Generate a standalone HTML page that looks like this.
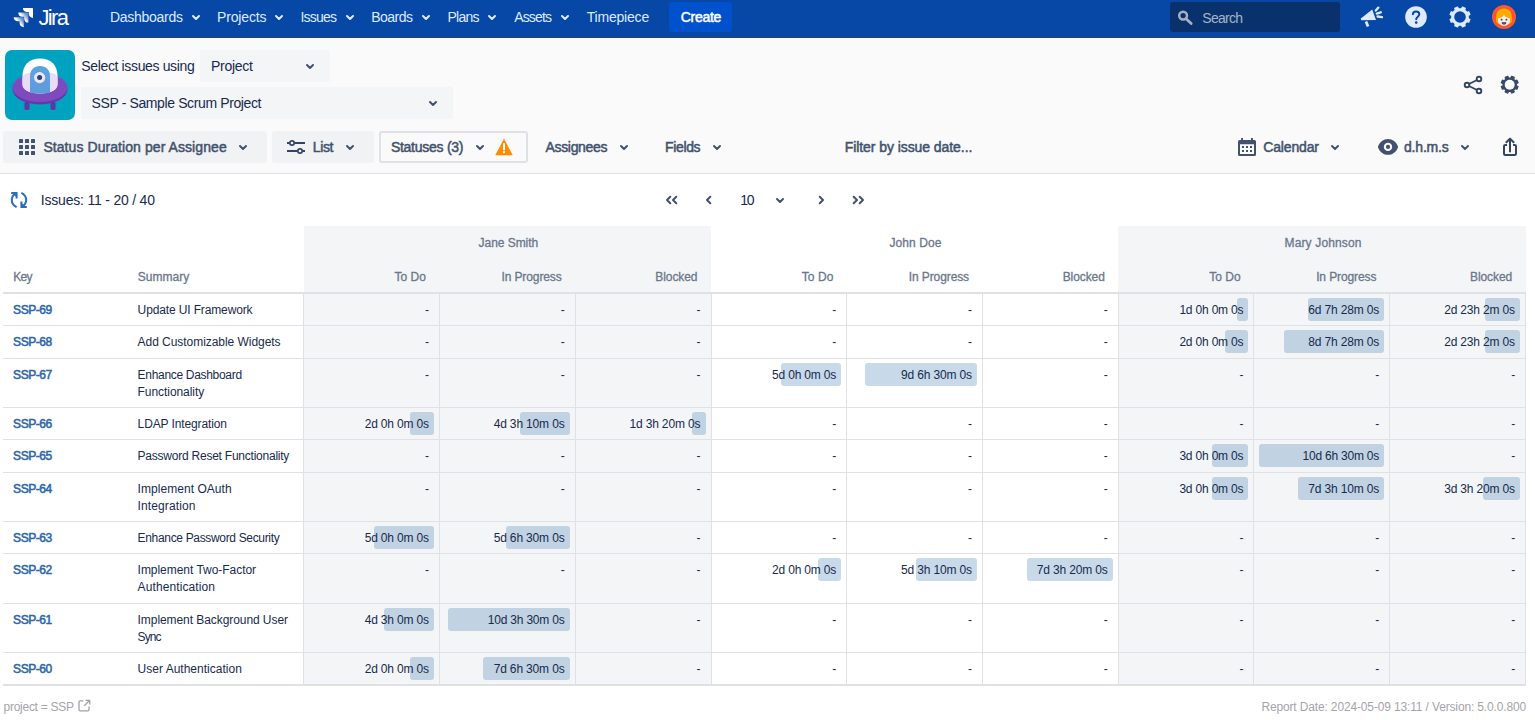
<!DOCTYPE html>
<html lang="en"><head><meta charset="utf-8"><title>Timepiece - Status Duration per Assignee</title>
<style>
html,body{margin:0;padding:0;}
body{width:1535px;height:720px;overflow:hidden;background:#fff;position:relative;font-family:"Liberation Sans", sans-serif;}
#root div,#root svg,#root span.t{position:absolute;}
#root span.t{white-space:nowrap;display:block;}
</style></head><body><div id="root">
<div style="left:0px;top:0px;width:1535px;height:37px;background:#0747A6;border-radius:0px;"></div>
<div style="left:0px;top:37px;width:1535px;height:1px;background:#2F3F5F;border-radius:0px;"></div>
<div style="left:0px;top:38px;width:1535px;height:135px;background:#FAFAFA;border-radius:0px;"></div>
<div style="left:0px;top:173px;width:1535px;height:1px;background:#DFE1E6;border-radius:0px;"></div>
<svg style="left:12px;top:6px;" width="24" height="24" viewBox="0 0 24 24"><defs><linearGradient id="jg1" x1="0.95" y1="0.25" x2="0.5" y2="0.62"><stop offset="0.15" stop-color="#fff" stop-opacity="0.4"/><stop offset="0.9" stop-color="#fff"/></linearGradient></defs>
<g transform="translate(-0.23,-0.03) scale(0.965)">
<path d="M11.53 2c0 2.400 1.970 4.350 4.350 4.350h1.780v1.700c0 2.400 1.940 4.340 4.340 4.350V2.840a.84.84 0 0 0-.84-.84h-9.630z" fill="#fff"/>
<path d="M6.770 6.800a4.362 4.362 0 0 0 4.340 4.340h1.800v1.720a4.362 4.362 0 0 0 4.340 4.340V7.630a.841.841 0 0 0-.83-.83H6.770z" fill="url(#jg1)"/>
<path d="M2 11.600c0 2.400 1.950 4.340 4.350 4.340h1.780v1.720c.01 2.390 1.950 4.340 4.340 4.340v-9.570a.84.84 0 0 0-.84-.84H2v.01z" fill="url(#jg1)"/>
</g></svg>
<svg style="left:191.0px;top:13.8px;" width="10" height="7" viewBox="0 0 10 7"><path d="M2 2 L5.0 5 L8 2" fill="none" stroke="#DEEBFF" stroke-width="2" stroke-linecap="round" stroke-linejoin="round"/></svg>
<svg style="left:274.0px;top:13.8px;" width="10" height="7" viewBox="0 0 10 7"><path d="M2 2 L5.0 5 L8 2" fill="none" stroke="#DEEBFF" stroke-width="2" stroke-linecap="round" stroke-linejoin="round"/></svg>
<svg style="left:344.5px;top:13.8px;" width="10" height="7" viewBox="0 0 10 7"><path d="M2 2 L5.0 5 L8 2" fill="none" stroke="#DEEBFF" stroke-width="2" stroke-linecap="round" stroke-linejoin="round"/></svg>
<svg style="left:421.0px;top:13.8px;" width="10" height="7" viewBox="0 0 10 7"><path d="M2 2 L5.0 5 L8 2" fill="none" stroke="#DEEBFF" stroke-width="2" stroke-linecap="round" stroke-linejoin="round"/></svg>
<svg style="left:487.0px;top:13.8px;" width="10" height="7" viewBox="0 0 10 7"><path d="M2 2 L5.0 5 L8 2" fill="none" stroke="#DEEBFF" stroke-width="2" stroke-linecap="round" stroke-linejoin="round"/></svg>
<svg style="left:560.0px;top:13.8px;" width="10" height="7" viewBox="0 0 10 7"><path d="M2 2 L5.0 5 L8 2" fill="none" stroke="#DEEBFF" stroke-width="2" stroke-linecap="round" stroke-linejoin="round"/></svg>
<div style="left:669px;top:2px;width:63px;height:30px;background:#0052CC;border-radius:3px;"></div>
<div style="left:1170px;top:2px;width:170px;height:30px;background:#09326C;border-radius:3px;"></div>
<svg style="left:1177px;top:9px;" width="17" height="17" viewBox="0 0 17 17"><circle cx="6.100" cy="6.600" r="3.900" fill="none" stroke="#A7B0C4" stroke-width="2.500"/><path d="M9.300 9.900 L14.200 14.500" stroke="#A7B0C4" stroke-width="2.700" stroke-linecap="round"/></svg>
<svg style="left:1358px;top:4px;" width="28" height="26" viewBox="0 0 28 26"><g fill="#DEEBFF" stroke="none">
<path d="M3.2 14.2 L14.2 5.6 L18 15.9 L3.4 16.2 Q2.6 15.2 3.2 14.2z"/>
</g><g stroke="#DEEBFF" stroke-width="2.3" stroke-linecap="round" fill="none">
<path d="M8 17.6 L10 22.6" stroke-linecap="butt" stroke-width="2.8"/>
<path d="M17.8 6.6 L20.4 3.6"/><path d="M18.8 9.6 L22.8 8.3"/><path d="M19.6 12.5 L24 13.2"/></g></svg>
<svg style="left:1404px;top:5px;" width="24" height="24" viewBox="0 0 24 24"><circle cx="12" cy="12" r="10.8" fill="#DEEBFF"/><path d="M8.9 9.3c0-1.8 1.4-2.9 3.2-2.9 1.9 0 3.2 1.1 3.2 2.8 0 2.3-3.1 2.6-3.1 5" fill="none" stroke="#0747A6" stroke-width="2" stroke-linecap="round"/><circle cx="12.2" cy="17.6" r="1.3" fill="#0747A6"/></svg>
<svg style="left:1448px;top:5px;" width="24" height="24" viewBox="0 0 24 24"><path d="M20.16 13.49 L21.90 14.47 L20.74 17.25 L18.83 16.72 L16.72 18.83 L17.25 20.74 L14.47 21.90 L13.49 20.16 L10.51 20.16 L9.53 21.90 L6.75 20.74 L7.28 18.83 L5.17 16.72 L3.26 17.25 L2.10 14.47 L3.84 13.49 L3.84 10.51 L2.10 9.53 L3.26 6.75 L5.17 7.28 L7.28 5.17 L6.75 3.26 L9.53 2.10 L10.51 3.84 L13.49 3.84 L14.47 2.10 L17.25 3.26 L16.72 5.17 L18.83 7.28 L20.74 6.75 L21.90 9.53 L20.16 10.51Z" fill="#DEEBFF" stroke="#DEEBFF" stroke-width="1.2" stroke-linejoin="round"/><circle cx="12" cy="12" r="8.0" fill="#DEEBFF"/><circle cx="12" cy="12" r="5.8" fill="#0747A6"/></svg>
<svg style="left:1491px;top:4px;" width="26" height="26" viewBox="0 0 26 26"><circle cx="13" cy="13" r="12" fill="#FF5630"/>
<path d="M13 4.6c4.3 0 7.6 3 7.6 7.2 0 2.1.9 3.2.2 5.6-.5 1.700-2 2.400-3 2.400H8.200c-1 0-2.500-.7-3-2.400-.7-2.400.2-3.500.2-5.600 0-4.200 3.300-7.200 7.600-7.200z" fill="#FFAB00"/>
<path d="M7 14.200c2.600-.2 4.800-1.300 6-3.200 1.200 1.900 3.400 3 6 3.200v2.600c0 2.900-2.700 5-6 5s-6-2.100-6-5z" fill="#FFEBE6"/>
<circle cx="10.600" cy="15.700" r=".9" fill="#253858"/><circle cx="15.400" cy="15.700" r=".9" fill="#253858"/>
<path d="M10.700 18.300h4.600c0 1.400-1 2.300-2.300 2.300s-2.300-.9-2.300-2.300z" fill="#253858"/><path d="M11.900 19.900c.7-.5 1.500-.5 2.200 0-.5.600-1.700.6-2.200 0z" fill="#FF5630"/></svg>
<svg style="left:5px;top:50px;" width="70" height="70" viewBox="0 0 70 70"><rect width="70" height="70" rx="7" fill="#00A3BF"/>
<rect x="19.500" y="52" width="5" height="8" rx="1.500" fill="#5E35A8"/><rect x="45.500" y="52" width="5" height="8" rx="1.500" fill="#5E35A8"/>
<ellipse cx="35" cy="39.500" rx="27.500" ry="15" fill="#6239AB"/>
<ellipse cx="35" cy="37.500" rx="27.500" ry="14.500" fill="#7F4AC0"/>
<path d="M17.500 26C17.500 15 24 8.500 35 8.500S52.500 15 52.500 26v8c0 6-7 9.500-17.500 9.500S17.500 40 17.500 34z" fill="#fff"/>
<path d="M17.500 28.500c0-2 1-3.500 2.500-4.500 4 -1.500 9.500-2.300 15-2.300s11 .8 15 2.300c1.500 1 2.500 2.500 2.500 4.500v5.500c0 6-7 9.500-17.500 9.500S17.500 40 17.500 34z" fill="#E9DDF5"/>
<path d="M25 26c0-6 4-10 10-10s10 4 10 10v16.600c-2.800.6-6.200.9-10 .9s-7.200-.3-10-.9z" fill="#5BA3DE"/>
<path d="M25 31h20v11.600c-2.800.6-6.200.9-10 .9s-7.200-.3-10-.9z" fill="#5E9CDB"/>
<circle cx="34.600" cy="27.600" r="5.600" fill="#EDE4F7"/><circle cx="34.600" cy="27.600" r="2.500" fill="#2E3F73"/></svg>
<div style="left:200px;top:50px;width:130px;height:32px;background:#F4F5F7;border-radius:3px;"></div>
<svg style="left:305.0px;top:63.0px;" width="10" height="7" viewBox="0 0 10 7"><path d="M2 2 L5.0 5 L8 2" fill="none" stroke="#42526E" stroke-width="2" stroke-linecap="round" stroke-linejoin="round"/></svg>
<div style="left:81px;top:87px;width:372px;height:32px;background:#F4F5F7;border-radius:3px;"></div>
<svg style="left:428.3px;top:99.9px;" width="10" height="7" viewBox="0 0 10 7"><path d="M2 2 L5.0 5 L8 2" fill="none" stroke="#42526E" stroke-width="2" stroke-linecap="round" stroke-linejoin="round"/></svg>
<svg style="left:1462px;top:74px;" width="24" height="24" viewBox="0 0 24 24"><g fill="none" stroke="#344563" stroke-width="1.9"><circle cx="5" cy="11" r="2.300"/><circle cx="17" cy="5" r="2.300"/><circle cx="17" cy="17" r="2.300"/><path d="M7 10 L15 6 M7 12 L15 16"/></g></svg>
<svg style="left:1498px;top:73px;" width="24" height="24" viewBox="0 0 24 24"><path d="M18.32 12.75 L20.08 13.64 L19.00 16.25 L17.12 15.64 L15.64 17.12 L16.25 19.00 L13.64 20.08 L12.75 18.32 L10.65 18.32 L9.76 20.08 L7.15 19.00 L7.76 17.12 L6.28 15.64 L4.40 16.25 L3.32 13.64 L5.08 12.75 L5.08 10.65 L3.32 9.76 L4.40 7.15 L6.28 7.76 L7.76 6.28 L7.15 4.40 L9.76 3.32 L10.65 5.08 L12.75 5.08 L13.64 3.32 L16.25 4.40 L15.64 6.28 L17.12 7.76 L19.00 7.15 L20.08 9.76 L18.32 10.65Z" fill="#3A4968" stroke="#3A4968" stroke-width="1.2" stroke-linejoin="round"/><circle cx="11.7" cy="11.7" r="6.4" fill="#3A4968"/><circle cx="11.700" cy="11.700" r="5" fill="#FAFAFA"/></svg>
<div style="left:3px;top:131px;width:264px;height:32px;background:#F1F2F4;border-radius:3px;"></div>
<div style="left:19px;top:139px;width:4px;height:4px;background:#42526E;border-radius:0.5px;"></div>
<div style="left:25px;top:139px;width:4px;height:4px;background:#42526E;border-radius:0.5px;"></div>
<div style="left:31px;top:139px;width:4px;height:4px;background:#42526E;border-radius:0.5px;"></div>
<div style="left:19px;top:145px;width:4px;height:4px;background:#42526E;border-radius:0.5px;"></div>
<div style="left:25px;top:145px;width:4px;height:4px;background:#42526E;border-radius:0.5px;"></div>
<div style="left:31px;top:145px;width:4px;height:4px;background:#42526E;border-radius:0.5px;"></div>
<div style="left:19px;top:151px;width:4px;height:4px;background:#42526E;border-radius:0.5px;"></div>
<div style="left:25px;top:151px;width:4px;height:4px;background:#42526E;border-radius:0.5px;"></div>
<div style="left:31px;top:151px;width:4px;height:4px;background:#42526E;border-radius:0.5px;"></div>
<svg style="left:238.0px;top:143.9px;" width="10" height="7" viewBox="0 0 10 7"><path d="M2 2 L5.0 5 L8 2" fill="none" stroke="#42526E" stroke-width="2" stroke-linecap="round" stroke-linejoin="round"/></svg>
<div style="left:272px;top:131px;width:102px;height:32px;background:#F1F2F4;border-radius:3px;"></div>
<svg style="left:285px;top:138px;" width="22" height="18" viewBox="0 0 22 18"><g stroke="#344563" stroke-width="2" fill="none"><path d="M2 5H4.200 M9.800 5H20 M2 13H12.200 M17.800 13H20"/><circle cx="7" cy="5" r="2.200" stroke-width="1.700"/><circle cx="15" cy="13" r="2.200" stroke-width="1.700"/></g></svg>
<svg style="left:345.0px;top:143.9px;" width="10" height="7" viewBox="0 0 10 7"><path d="M2 2 L5.0 5 L8 2" fill="none" stroke="#42526E" stroke-width="2" stroke-linecap="round" stroke-linejoin="round"/></svg>
<div style="left:379px;top:131px;width:149px;height:32px;background:#FAFAFA;border-radius:3px;box-sizing:border-box;border:2px solid #DFE1E6;"></div>
<svg style="left:475.0px;top:143.9px;" width="10" height="7" viewBox="0 0 10 7"><path d="M2 2 L5.0 5 L8 2" fill="none" stroke="#42526E" stroke-width="2" stroke-linecap="round" stroke-linejoin="round"/></svg>
<svg style="left:494px;top:138px;" width="20" height="18" viewBox="0 0 20 18"><path d="M10 1.200 L18.300 17 H1.700Z" fill="#FF8B00" stroke="#FF8B00" stroke-width="0.600" stroke-linejoin="round"/><rect x="9" y="5.200" width="2" height="7" fill="#fff"/><rect x="9" y="13.200" width="2" height="2" fill="#fff"/></svg>
<svg style="left:619.2px;top:143.9px;" width="10" height="7" viewBox="0 0 10 7"><path d="M2 2 L5.0 5 L8 2" fill="none" stroke="#42526E" stroke-width="2" stroke-linecap="round" stroke-linejoin="round"/></svg>
<svg style="left:712.0px;top:143.9px;" width="10" height="7" viewBox="0 0 10 7"><path d="M2 2 L5.0 5 L8 2" fill="none" stroke="#42526E" stroke-width="2" stroke-linecap="round" stroke-linejoin="round"/></svg>
<svg style="left:1237px;top:137px;" width="20" height="20" viewBox="0 0 20 20"><g fill="#42526E"><rect x="4.100" y="1" width="1.900" height="3"/><rect x="14" y="1" width="1.900" height="3"/>
<path d="M2.500 2.900h15a1.500 1.500 0 0 1 1.500 1.500v13a1.500 1.500 0 0 1-1.500 1.500h-15a1.500 1.500 0 0 1-1.500-1.500v-13a1.500 1.500 0 0 1 1.500-1.500zM3 7.300v9.600h14V7.300z" fill-rule="evenodd"/>
<rect x="5" y="9" width="2" height="2"/><rect x="9" y="9" width="2" height="2"/><rect x="13" y="9" width="2" height="2"/>
<rect x="5" y="13" width="2" height="2"/><rect x="9" y="13" width="2" height="2"/><rect x="13" y="13" width="2" height="2"/></g></svg>
<svg style="left:1330.0px;top:143.9px;" width="10" height="7" viewBox="0 0 10 7"><path d="M2 2 L5.0 5 L8 2" fill="none" stroke="#42526E" stroke-width="2" stroke-linecap="round" stroke-linejoin="round"/></svg>
<svg style="left:1377px;top:137px;" width="22" height="20" viewBox="0 0 22 20"><path d="M0.900 9.900C2.600 4.800 6.600 2 11 2s8.400 2.800 10.100 7.900C19.400 15 15.400 17.800 11 17.800S2.600 15 0.900 9.900z" fill="#42526E"/><circle cx="11" cy="9.900" r="4.200" fill="#FAFAFA"/><circle cx="11" cy="9.900" r="2.100" fill="#42526E"/></svg>
<svg style="left:1460.0px;top:143.9px;" width="10" height="7" viewBox="0 0 10 7"><path d="M2 2 L5.0 5 L8 2" fill="none" stroke="#42526E" stroke-width="2" stroke-linecap="round" stroke-linejoin="round"/></svg>
<svg style="left:1500px;top:136px;" width="20" height="22" viewBox="0 0 20 22"><g fill="none" stroke="#344563" stroke-width="2" stroke-linejoin="round"><path d="M7 9H5.200a1.200 1.200 0 0 0-1.200 1.200V17.800A1.200 1.200 0 0 0 5.200 19H14.800a1.200 1.200 0 0 0 1.200-1.200V10.200A1.200 1.200 0 0 0 14.800 9H13" stroke-linecap="butt"/><path d="M10 15.500V3.200 M6.400 6.300 L10 2.600 L13.600 6.300" stroke-linecap="round"/></g></svg>
<svg style="left:9px;top:190px;" width="20" height="20" viewBox="0 0 20 20"><g fill="none" stroke="#2F6DB2" stroke-width="2"><path d="M7.600 17.200C4.300 15.500 2.800 13 2.800 10 2.800 7 4.300 4.800 7 3.200"/><path d="M2.200 3H7.600V8.400" stroke-linejoin="miter"/><path d="M3.500 3H7.600V7.400z" fill="#2F6DB2" stroke="none"/>
<path d="M12.400 2.800C15.700 4.500 17.200 7 17.200 10c0 3-1.500 5.200-4.200 6.800"/><path d="M12.400 11.600V17H17.800" stroke-linejoin="miter"/><path d="M12.400 12.600V17H16.500z" fill="#2F6DB2" stroke="none"/></g></svg>
<svg style="left:775.0px;top:196.9px;" width="10" height="7" viewBox="0 0 10 7"><path d="M2 2 L5.0 5 L8 2" fill="none" stroke="#42526E" stroke-width="2" stroke-linecap="round" stroke-linejoin="round"/></svg>
<div style="left:304px;top:226px;width:407px;height:458px;background:#F4F5F7;border-radius:0px;"></div>
<div style="left:1118px;top:226px;width:408px;height:458px;background:#F4F5F7;border-radius:0px;"></div>
<div style="left:3px;top:292px;width:1523px;height:2px;background:#DFE1E6;border-radius:0px;"></div>
<div style="left:3px;top:684px;width:1523px;height:2px;background:#DFE1E6;border-radius:0px;"></div>
<div style="left:3px;top:325px;width:1523px;height:1px;background:#DFE1E6;border-radius:0px;"></div>
<div style="left:3px;top:358px;width:1523px;height:1px;background:#DFE1E6;border-radius:0px;"></div>
<div style="left:3px;top:407px;width:1523px;height:1px;background:#DFE1E6;border-radius:0px;"></div>
<div style="left:3px;top:439px;width:1523px;height:1px;background:#DFE1E6;border-radius:0px;"></div>
<div style="left:3px;top:472px;width:1523px;height:1px;background:#DFE1E6;border-radius:0px;"></div>
<div style="left:3px;top:521px;width:1523px;height:1px;background:#DFE1E6;border-radius:0px;"></div>
<div style="left:3px;top:553px;width:1523px;height:1px;background:#DFE1E6;border-radius:0px;"></div>
<div style="left:3px;top:603px;width:1523px;height:1px;background:#DFE1E6;border-radius:0px;"></div>
<div style="left:3px;top:652px;width:1523px;height:1px;background:#DFE1E6;border-radius:0px;"></div>
<div style="left:303px;top:294px;width:1px;height:390px;background:#DFE1E6;border-radius:0px;"></div>
<div style="left:439px;top:294px;width:1px;height:390px;background:#DFE1E6;border-radius:0px;"></div>
<div style="left:575px;top:294px;width:1px;height:390px;background:#DFE1E6;border-radius:0px;"></div>
<div style="left:711px;top:294px;width:1px;height:390px;background:#DFE1E6;border-radius:0px;"></div>
<div style="left:846px;top:294px;width:1px;height:390px;background:#DFE1E6;border-radius:0px;"></div>
<div style="left:982px;top:294px;width:1px;height:390px;background:#DFE1E6;border-radius:0px;"></div>
<div style="left:1118px;top:294px;width:1px;height:390px;background:#DFE1E6;border-radius:0px;"></div>
<div style="left:1253px;top:294px;width:1px;height:390px;background:#DFE1E6;border-radius:0px;"></div>
<div style="left:1389px;top:294px;width:1px;height:390px;background:#DFE1E6;border-radius:0px;"></div>
<div style="left:1525px;top:294px;width:1px;height:390px;background:#DFE1E6;border-radius:0px;"></div>
<div style="left:1237px;top:298px;width:11px;height:23px;background:#C1D2E3;border-radius:3px;"></div>
<div style="left:1308px;top:298px;width:76px;height:23px;background:#C1D2E3;border-radius:3px;"></div>
<div style="left:1485px;top:298px;width:35px;height:23px;background:#C1D2E3;border-radius:3px;"></div>
<div style="left:1225px;top:330px;width:23px;height:23px;background:#C1D2E3;border-radius:3px;"></div>
<div style="left:1284px;top:330px;width:100px;height:23px;background:#C1D2E3;border-radius:3px;"></div>
<div style="left:1485px;top:330px;width:35px;height:23px;background:#C1D2E3;border-radius:3px;"></div>
<div style="left:781px;top:363px;width:60px;height:23px;background:#C8D9E9;border-radius:3px;"></div>
<div style="left:865px;top:363px;width:112px;height:23px;background:#C8D9E9;border-radius:3px;"></div>
<div style="left:410px;top:412px;width:24px;height:23px;background:#C1D2E3;border-radius:3px;"></div>
<div style="left:520px;top:412px;width:50px;height:23px;background:#C1D2E3;border-radius:3px;"></div>
<div style="left:692px;top:412px;width:14px;height:23px;background:#C1D2E3;border-radius:3px;"></div>
<div style="left:1212px;top:444px;width:36px;height:23px;background:#C1D2E3;border-radius:3px;"></div>
<div style="left:1259px;top:444px;width:125px;height:23px;background:#C1D2E3;border-radius:3px;"></div>
<div style="left:1212px;top:477px;width:36px;height:23px;background:#C1D2E3;border-radius:3px;"></div>
<div style="left:1298px;top:477px;width:86px;height:23px;background:#C1D2E3;border-radius:3px;"></div>
<div style="left:1483px;top:477px;width:37px;height:23px;background:#C1D2E3;border-radius:3px;"></div>
<div style="left:374px;top:526px;width:60px;height:23px;background:#C1D2E3;border-radius:3px;"></div>
<div style="left:506px;top:526px;width:64px;height:23px;background:#C1D2E3;border-radius:3px;"></div>
<div style="left:818px;top:558px;width:23px;height:23px;background:#C8D9E9;border-radius:3px;"></div>
<div style="left:916px;top:558px;width:61px;height:23px;background:#C8D9E9;border-radius:3px;"></div>
<div style="left:1027px;top:558px;width:86px;height:23px;background:#C8D9E9;border-radius:3px;"></div>
<div style="left:384px;top:608px;width:50px;height:23px;background:#C1D2E3;border-radius:3px;"></div>
<div style="left:448px;top:608px;width:122px;height:23px;background:#C1D2E3;border-radius:3px;"></div>
<div style="left:410px;top:657px;width:24px;height:23px;background:#C1D2E3;border-radius:3px;"></div>
<div style="left:483px;top:657px;width:87px;height:23px;background:#C1D2E3;border-radius:3px;"></div>
<svg style="left:0;top:0;pointer-events:none" width="1535" height="720" viewBox="0 0 1535 720"><path d="M670.3 196.7 L667.0 200 L670.3 203.3" fill="none" stroke="#42526E" stroke-width="2" stroke-linecap="round" stroke-linejoin="round"/><path d="M676.3 196.7 L673.0 200 L676.3 203.3" fill="none" stroke="#42526E" stroke-width="2" stroke-linecap="round" stroke-linejoin="round"/><path d="M710.3 196.7 L707.0 200 L710.3 203.3" fill="none" stroke="#42526E" stroke-width="2" stroke-linecap="round" stroke-linejoin="round"/><path d="M819.7 196.7 L823.0 200 L819.7 203.3" fill="none" stroke="#42526E" stroke-width="2" stroke-linecap="round" stroke-linejoin="round"/><path d="M853.7 196.7 L857.0 200 L853.7 203.3" fill="none" stroke="#42526E" stroke-width="2" stroke-linecap="round" stroke-linejoin="round"/><path d="M859.7 196.7 L863.0 200 L859.7 203.3" fill="none" stroke="#42526E" stroke-width="2" stroke-linecap="round" stroke-linejoin="round"/><path d="M83.300 700.800H80.200a1.200 1.200 0 0 0-1.200 1.200v7.600a1.200 1.200 0 0 0 1.200 1.200h7.600a1.200 1.200 0 0 0 1.200-1.200V706.500" fill="none" stroke="#A0A1A5" stroke-width="1.300"/><path d="M84.300 705.700 L89.500 700.500 M85.600 700.300H89.700V704.400" fill="none" stroke="#A0A1A5" stroke-width="1.300"/></svg>
<span class="t" id="t0" style="top:1.30px;font-size:22px;line-height:33px;height:33px;color:#fff;letter-spacing:-1.651px;left:38.50px;">Jira</span>
<span class="t" id="t1" style="top:6.80px;font-size:14px;line-height:21px;height:21px;color:#DEEBFF;letter-spacing:-0.278px;left:110.00px;">Dashboards</span>
<span class="t" id="t2" style="top:6.80px;font-size:14px;line-height:21px;height:21px;color:#DEEBFF;letter-spacing:-0.154px;left:217.00px;">Projects</span>
<span class="t" id="t3" style="top:6.80px;font-size:14px;line-height:21px;height:21px;color:#DEEBFF;letter-spacing:-0.794px;left:300.50px;">Issues</span>
<span class="t" id="t4" style="top:6.80px;font-size:14px;line-height:21px;height:21px;color:#DEEBFF;letter-spacing:-0.532px;left:371.30px;">Boards</span>
<span class="t" id="t5" style="top:6.80px;font-size:14px;line-height:21px;height:21px;color:#DEEBFF;letter-spacing:-0.758px;left:447.50px;">Plans</span>
<span class="t" id="t6" style="top:6.80px;font-size:14px;line-height:21px;height:21px;color:#DEEBFF;letter-spacing:-0.843px;left:514.20px;">Assets</span>
<span class="t" id="t7" style="top:6.80px;font-size:14px;line-height:21px;height:21px;color:#DEEBFF;letter-spacing:-0.195px;left:586.70px;">Timepiece</span>
<span class="t" id="t8" style="top:6.80px;font-size:14px;line-height:21px;height:21px;color:#fff;-webkit-text-stroke:0.5px #fff;letter-spacing:-0.306px;left:680.80px;">Create</span>
<span class="t" id="t9" style="top:7.80px;font-size:14px;line-height:21px;height:21px;color:#A6B2CA;letter-spacing:-0.712px;left:1202.30px;">Search</span>
<span class="t" id="t10" style="top:55.80px;font-size:14px;line-height:21px;height:21px;color:#172B4D;letter-spacing:-0.358px;left:81.30px;">Select issues using</span>
<span class="t" id="t11" style="top:55.80px;font-size:14px;line-height:21px;height:21px;color:#172B4D;letter-spacing:-0.263px;left:211.00px;">Project</span>
<span class="t" id="t12" style="top:92.80px;font-size:14px;line-height:21px;height:21px;color:#172B4D;letter-spacing:-0.379px;left:91.50px;">SSP - Sample Scrum Project</span>
<span class="t" id="t13" style="top:136.80px;font-size:14px;line-height:21px;height:21px;color:#42526E;-webkit-text-stroke:0.5px #42526E;letter-spacing:0.072px;left:43.40px;">Status Duration per Assignee</span>
<span class="t" id="t14" style="top:136.80px;font-size:14px;line-height:21px;height:21px;color:#42526E;-webkit-text-stroke:0.5px #42526E;letter-spacing:-0.399px;left:312.80px;">List</span>
<span class="t" id="t15" style="top:136.80px;font-size:14px;line-height:21px;height:21px;color:#42526E;-webkit-text-stroke:0.5px #42526E;letter-spacing:-0.262px;left:390.90px;">Statuses (3)</span>
<span class="t" id="t16" style="top:136.80px;font-size:14px;line-height:21px;height:21px;color:#42526E;-webkit-text-stroke:0.5px #42526E;letter-spacing:-0.324px;left:545.50px;">Assignees</span>
<span class="t" id="t17" style="top:136.80px;font-size:14px;line-height:21px;height:21px;color:#42526E;-webkit-text-stroke:0.5px #42526E;letter-spacing:-0.352px;left:665.00px;">Fields</span>
<span class="t" id="t18" style="top:136.80px;font-size:14px;line-height:21px;height:21px;color:#42526E;-webkit-text-stroke:0.5px #42526E;letter-spacing:-0.067px;left:844.70px;">Filter by issue date...</span>
<span class="t" id="t19" style="top:136.80px;font-size:14px;line-height:21px;height:21px;color:#42526E;-webkit-text-stroke:0.5px #42526E;letter-spacing:-0.161px;left:1263.30px;">Calendar</span>
<span class="t" id="t20" style="top:136.80px;font-size:14px;line-height:21px;height:21px;color:#42526E;-webkit-text-stroke:0.5px #42526E;letter-spacing:-0.184px;left:1404.00px;">d.h.m.s</span>
<span class="t" id="t21" style="top:189.80px;font-size:14px;line-height:21px;height:21px;color:#172B4D;letter-spacing:-0.202px;left:40.80px;">Issues: 11 - 20 / 40</span>
<span class="t" id="t22" style="top:189.80px;font-size:14px;line-height:21px;height:21px;color:#172B4D;letter-spacing:-1.278px;left:740.30px;">10</span>
<span class="t" id="t23" style="top:268.30px;font-size:12px;line-height:18px;height:18px;color:#6B778C;-webkit-text-stroke:0.3px #6B778C;letter-spacing:-0.744px;left:13.30px;">Key</span>
<span class="t" id="t24" style="top:268.30px;font-size:12px;line-height:18px;height:18px;color:#6B778C;-webkit-text-stroke:0.3px #6B778C;letter-spacing:0.026px;left:137.70px;">Summary</span>
<span class="t" id="t25" style="top:234.30px;font-size:12px;line-height:18px;height:18px;color:#6B778C;-webkit-text-stroke:0.3px #6B778C;letter-spacing:-0.048px;left:478.60px;">Jane Smith</span>
<span class="t" id="t26" style="top:234.30px;font-size:12px;line-height:18px;height:18px;color:#6B778C;-webkit-text-stroke:0.3px #6B778C;letter-spacing:0.089px;left:889.50px;">John Doe</span>
<span class="t" id="t27" style="top:234.30px;font-size:12px;line-height:18px;height:18px;color:#6B778C;-webkit-text-stroke:0.3px #6B778C;letter-spacing:0.148px;left:1284.50px;">Mary Johnson</span>
<span class="t" id="t28" style="top:268.30px;font-size:12px;line-height:18px;height:18px;color:#6B778C;-webkit-text-stroke:0.3px #6B778C;letter-spacing:0.035px;left:394.48px;">To Do</span>
<span class="t" id="t29" style="top:268.30px;font-size:12px;line-height:18px;height:18px;color:#6B778C;-webkit-text-stroke:0.3px #6B778C;letter-spacing:-0.106px;left:501.46px;">In Progress</span>
<span class="t" id="t30" style="top:268.30px;font-size:12px;line-height:18px;height:18px;color:#6B778C;-webkit-text-stroke:0.3px #6B778C;letter-spacing:-0.084px;left:655.34px;">Blocked</span>
<span class="t" id="t31" style="top:268.30px;font-size:12px;line-height:18px;height:18px;color:#6B778C;-webkit-text-stroke:0.3px #6B778C;letter-spacing:0.035px;left:801.82px;">To Do</span>
<span class="t" id="t32" style="top:268.30px;font-size:12px;line-height:18px;height:18px;color:#6B778C;-webkit-text-stroke:0.3px #6B778C;letter-spacing:-0.106px;left:908.80px;">In Progress</span>
<span class="t" id="t33" style="top:268.30px;font-size:12px;line-height:18px;height:18px;color:#6B778C;-webkit-text-stroke:0.3px #6B778C;letter-spacing:-0.084px;left:1062.68px;">Blocked</span>
<span class="t" id="t34" style="top:268.30px;font-size:12px;line-height:18px;height:18px;color:#6B778C;-webkit-text-stroke:0.3px #6B778C;letter-spacing:0.035px;left:1209.16px;">To Do</span>
<span class="t" id="t35" style="top:268.30px;font-size:12px;line-height:18px;height:18px;color:#6B778C;-webkit-text-stroke:0.3px #6B778C;letter-spacing:-0.106px;left:1316.14px;">In Progress</span>
<span class="t" id="t36" style="top:268.30px;font-size:12px;line-height:18px;height:18px;color:#6B778C;-webkit-text-stroke:0.3px #6B778C;letter-spacing:-0.084px;left:1470.02px;">Blocked</span>
<span class="t" id="t37" style="top:301.30px;font-size:12px;line-height:18px;height:18px;color:#2E67AA;-webkit-text-stroke:0.55px #2E67AA;letter-spacing:-0.452px;left:13.10px;">SSP-69</span>
<span class="t" id="t38" style="top:301.30px;font-size:12px;line-height:18px;height:18px;color:#172B4D;letter-spacing:-0.132px;left:137.60px;">Update UI Framework</span>
<span class="t" id="t39" style="top:301.30px;font-size:12px;line-height:18px;height:18px;color:#172B4D;right:1106.12px;">-</span>
<span class="t" id="t40" style="top:301.30px;font-size:12px;line-height:18px;height:18px;color:#172B4D;right:970.34px;">-</span>
<span class="t" id="t41" style="top:301.30px;font-size:12px;line-height:18px;height:18px;color:#172B4D;right:834.56px;">-</span>
<span class="t" id="t42" style="top:301.30px;font-size:12px;line-height:18px;height:18px;color:#172B4D;right:698.78px;">-</span>
<span class="t" id="t43" style="top:301.30px;font-size:12px;line-height:18px;height:18px;color:#172B4D;right:563.00px;">-</span>
<span class="t" id="t44" style="top:301.30px;font-size:12px;line-height:18px;height:18px;color:#172B4D;right:427.22px;">-</span>
<span class="t" id="t45" style="top:301.30px;font-size:12px;line-height:18px;height:18px;color:#172B4D;letter-spacing:-0.185px;right:291.62px;">1d 0h 0m 0s</span>
<span class="t" id="t46" style="top:301.30px;font-size:12px;line-height:18px;height:18px;color:#172B4D;letter-spacing:-0.156px;right:155.82px;">6d 7h 28m 0s</span>
<span class="t" id="t47" style="top:301.30px;font-size:12px;line-height:18px;height:18px;color:#172B4D;letter-spacing:-0.156px;right:20.04px;">2d 23h 2m 0s</span>
<span class="t" id="t48" style="top:333.30px;font-size:12px;line-height:18px;height:18px;color:#2E67AA;-webkit-text-stroke:0.55px #2E67AA;letter-spacing:-0.452px;left:13.10px;">SSP-68</span>
<span class="t" id="t49" style="top:333.30px;font-size:12px;line-height:18px;height:18px;color:#172B4D;letter-spacing:-0.047px;left:137.60px;">Add Customizable Widgets</span>
<span class="t" id="t50" style="top:333.30px;font-size:12px;line-height:18px;height:18px;color:#172B4D;right:1106.12px;">-</span>
<span class="t" id="t51" style="top:333.30px;font-size:12px;line-height:18px;height:18px;color:#172B4D;right:970.34px;">-</span>
<span class="t" id="t52" style="top:333.30px;font-size:12px;line-height:18px;height:18px;color:#172B4D;right:834.56px;">-</span>
<span class="t" id="t53" style="top:333.30px;font-size:12px;line-height:18px;height:18px;color:#172B4D;right:698.78px;">-</span>
<span class="t" id="t54" style="top:333.30px;font-size:12px;line-height:18px;height:18px;color:#172B4D;right:563.00px;">-</span>
<span class="t" id="t55" style="top:333.30px;font-size:12px;line-height:18px;height:18px;color:#172B4D;right:427.22px;">-</span>
<span class="t" id="t56" style="top:333.30px;font-size:12px;line-height:18px;height:18px;color:#172B4D;letter-spacing:-0.185px;right:291.62px;">2d 0h 0m 0s</span>
<span class="t" id="t57" style="top:333.30px;font-size:12px;line-height:18px;height:18px;color:#172B4D;letter-spacing:-0.156px;right:155.82px;">8d 7h 28m 0s</span>
<span class="t" id="t58" style="top:333.30px;font-size:12px;line-height:18px;height:18px;color:#172B4D;letter-spacing:-0.156px;right:20.04px;">2d 23h 2m 0s</span>
<span class="t" id="t59" style="top:366.30px;font-size:12px;line-height:18px;height:18px;color:#2E67AA;-webkit-text-stroke:0.55px #2E67AA;letter-spacing:-0.452px;left:13.10px;">SSP-67</span>
<span class="t" id="t60" style="top:366.30px;font-size:12px;line-height:18px;height:18px;color:#172B4D;letter-spacing:-0.308px;left:137.60px;">Enhance Dashboard</span>
<span class="t" id="t61" style="top:383.30px;font-size:12px;line-height:18px;height:18px;color:#172B4D;letter-spacing:-0.065px;left:137.60px;">Functionality</span>
<span class="t" id="t62" style="top:366.30px;font-size:12px;line-height:18px;height:18px;color:#172B4D;right:1106.12px;">-</span>
<span class="t" id="t63" style="top:366.30px;font-size:12px;line-height:18px;height:18px;color:#172B4D;right:970.34px;">-</span>
<span class="t" id="t64" style="top:366.30px;font-size:12px;line-height:18px;height:18px;color:#172B4D;right:834.56px;">-</span>
<span class="t" id="t65" style="top:366.30px;font-size:12px;line-height:18px;height:18px;color:#172B4D;letter-spacing:-0.185px;right:698.96px;">5d 0h 0m 0s</span>
<span class="t" id="t66" style="top:366.30px;font-size:12px;line-height:18px;height:18px;color:#172B4D;letter-spacing:-0.156px;right:563.16px;">9d 6h 30m 0s</span>
<span class="t" id="t67" style="top:366.30px;font-size:12px;line-height:18px;height:18px;color:#172B4D;right:427.22px;">-</span>
<span class="t" id="t68" style="top:366.30px;font-size:12px;line-height:18px;height:18px;color:#172B4D;right:291.44px;">-</span>
<span class="t" id="t69" style="top:366.30px;font-size:12px;line-height:18px;height:18px;color:#172B4D;right:155.66px;">-</span>
<span class="t" id="t70" style="top:366.30px;font-size:12px;line-height:18px;height:18px;color:#172B4D;right:19.88px;">-</span>
<span class="t" id="t71" style="top:415.30px;font-size:12px;line-height:18px;height:18px;color:#2E67AA;-webkit-text-stroke:0.55px #2E67AA;letter-spacing:-0.452px;left:13.10px;">SSP-66</span>
<span class="t" id="t72" style="top:415.30px;font-size:12px;line-height:18px;height:18px;color:#172B4D;letter-spacing:-0.118px;left:137.60px;">LDAP Integration</span>
<span class="t" id="t73" style="top:415.30px;font-size:12px;line-height:18px;height:18px;color:#172B4D;letter-spacing:-0.185px;right:1106.30px;">2d 0h 0m 0s</span>
<span class="t" id="t74" style="top:415.30px;font-size:12px;line-height:18px;height:18px;color:#172B4D;letter-spacing:-0.156px;right:970.50px;">4d 3h 10m 0s</span>
<span class="t" id="t75" style="top:415.30px;font-size:12px;line-height:18px;height:18px;color:#172B4D;letter-spacing:-0.156px;right:834.72px;">1d 3h 20m 0s</span>
<span class="t" id="t76" style="top:415.30px;font-size:12px;line-height:18px;height:18px;color:#172B4D;right:698.78px;">-</span>
<span class="t" id="t77" style="top:415.30px;font-size:12px;line-height:18px;height:18px;color:#172B4D;right:563.00px;">-</span>
<span class="t" id="t78" style="top:415.30px;font-size:12px;line-height:18px;height:18px;color:#172B4D;right:427.22px;">-</span>
<span class="t" id="t79" style="top:415.30px;font-size:12px;line-height:18px;height:18px;color:#172B4D;right:291.44px;">-</span>
<span class="t" id="t80" style="top:415.30px;font-size:12px;line-height:18px;height:18px;color:#172B4D;right:155.66px;">-</span>
<span class="t" id="t81" style="top:415.30px;font-size:12px;line-height:18px;height:18px;color:#172B4D;right:19.88px;">-</span>
<span class="t" id="t82" style="top:447.30px;font-size:12px;line-height:18px;height:18px;color:#2E67AA;-webkit-text-stroke:0.55px #2E67AA;letter-spacing:-0.452px;left:13.10px;">SSP-65</span>
<span class="t" id="t83" style="top:447.30px;font-size:12px;line-height:18px;height:18px;color:#172B4D;letter-spacing:-0.233px;left:137.60px;">Password Reset Functionality</span>
<span class="t" id="t84" style="top:447.30px;font-size:12px;line-height:18px;height:18px;color:#172B4D;right:1106.12px;">-</span>
<span class="t" id="t85" style="top:447.30px;font-size:12px;line-height:18px;height:18px;color:#172B4D;right:970.34px;">-</span>
<span class="t" id="t86" style="top:447.30px;font-size:12px;line-height:18px;height:18px;color:#172B4D;right:834.56px;">-</span>
<span class="t" id="t87" style="top:447.30px;font-size:12px;line-height:18px;height:18px;color:#172B4D;right:698.78px;">-</span>
<span class="t" id="t88" style="top:447.30px;font-size:12px;line-height:18px;height:18px;color:#172B4D;right:563.00px;">-</span>
<span class="t" id="t89" style="top:447.30px;font-size:12px;line-height:18px;height:18px;color:#172B4D;right:427.22px;">-</span>
<span class="t" id="t90" style="top:447.30px;font-size:12px;line-height:18px;height:18px;color:#172B4D;letter-spacing:-0.185px;right:291.62px;">3d 0h 0m 0s</span>
<span class="t" id="t91" style="top:447.30px;font-size:12px;line-height:18px;height:18px;color:#172B4D;letter-spacing:-0.216px;right:155.88px;">10d 6h 30m 0s</span>
<span class="t" id="t92" style="top:447.30px;font-size:12px;line-height:18px;height:18px;color:#172B4D;right:19.88px;">-</span>
<span class="t" id="t93" style="top:480.30px;font-size:12px;line-height:18px;height:18px;color:#2E67AA;-webkit-text-stroke:0.55px #2E67AA;letter-spacing:-0.452px;left:13.10px;">SSP-64</span>
<span class="t" id="t94" style="top:480.30px;font-size:12px;line-height:18px;height:18px;color:#172B4D;letter-spacing:0.045px;left:137.60px;">Implement OAuth</span>
<span class="t" id="t95" style="top:497.30px;font-size:12px;line-height:18px;height:18px;color:#172B4D;letter-spacing:0.118px;left:137.60px;">Integration</span>
<span class="t" id="t96" style="top:480.30px;font-size:12px;line-height:18px;height:18px;color:#172B4D;right:1106.12px;">-</span>
<span class="t" id="t97" style="top:480.30px;font-size:12px;line-height:18px;height:18px;color:#172B4D;right:970.34px;">-</span>
<span class="t" id="t98" style="top:480.30px;font-size:12px;line-height:18px;height:18px;color:#172B4D;right:834.56px;">-</span>
<span class="t" id="t99" style="top:480.30px;font-size:12px;line-height:18px;height:18px;color:#172B4D;right:698.78px;">-</span>
<span class="t" id="t100" style="top:480.30px;font-size:12px;line-height:18px;height:18px;color:#172B4D;right:563.00px;">-</span>
<span class="t" id="t101" style="top:480.30px;font-size:12px;line-height:18px;height:18px;color:#172B4D;right:427.22px;">-</span>
<span class="t" id="t102" style="top:480.30px;font-size:12px;line-height:18px;height:18px;color:#172B4D;letter-spacing:-0.185px;right:291.62px;">3d 0h 0m 0s</span>
<span class="t" id="t103" style="top:480.30px;font-size:12px;line-height:18px;height:18px;color:#172B4D;letter-spacing:-0.156px;right:155.82px;">7d 3h 10m 0s</span>
<span class="t" id="t104" style="top:480.30px;font-size:12px;line-height:18px;height:18px;color:#172B4D;letter-spacing:-0.156px;right:20.04px;">3d 3h 20m 0s</span>
<span class="t" id="t105" style="top:529.30px;font-size:12px;line-height:18px;height:18px;color:#2E67AA;-webkit-text-stroke:0.55px #2E67AA;letter-spacing:-0.452px;left:13.10px;">SSP-63</span>
<span class="t" id="t106" style="top:529.30px;font-size:12px;line-height:18px;height:18px;color:#172B4D;letter-spacing:-0.332px;left:137.60px;">Enhance Password Security</span>
<span class="t" id="t107" style="top:529.30px;font-size:12px;line-height:18px;height:18px;color:#172B4D;letter-spacing:-0.185px;right:1106.30px;">5d 0h 0m 0s</span>
<span class="t" id="t108" style="top:529.30px;font-size:12px;line-height:18px;height:18px;color:#172B4D;letter-spacing:-0.156px;right:970.50px;">5d 6h 30m 0s</span>
<span class="t" id="t109" style="top:529.30px;font-size:12px;line-height:18px;height:18px;color:#172B4D;right:834.56px;">-</span>
<span class="t" id="t110" style="top:529.30px;font-size:12px;line-height:18px;height:18px;color:#172B4D;right:698.78px;">-</span>
<span class="t" id="t111" style="top:529.30px;font-size:12px;line-height:18px;height:18px;color:#172B4D;right:563.00px;">-</span>
<span class="t" id="t112" style="top:529.30px;font-size:12px;line-height:18px;height:18px;color:#172B4D;right:427.22px;">-</span>
<span class="t" id="t113" style="top:529.30px;font-size:12px;line-height:18px;height:18px;color:#172B4D;right:291.44px;">-</span>
<span class="t" id="t114" style="top:529.30px;font-size:12px;line-height:18px;height:18px;color:#172B4D;right:155.66px;">-</span>
<span class="t" id="t115" style="top:529.30px;font-size:12px;line-height:18px;height:18px;color:#172B4D;right:19.88px;">-</span>
<span class="t" id="t116" style="top:561.30px;font-size:12px;line-height:18px;height:18px;color:#2E67AA;-webkit-text-stroke:0.55px #2E67AA;letter-spacing:-0.452px;left:13.10px;">SSP-62</span>
<span class="t" id="t117" style="top:561.30px;font-size:12px;line-height:18px;height:18px;color:#172B4D;letter-spacing:-0.035px;left:137.60px;">Implement Two-Factor</span>
<span class="t" id="t118" style="top:578.30px;font-size:12px;line-height:18px;height:18px;color:#172B4D;letter-spacing:0.095px;left:137.60px;">Authentication</span>
<span class="t" id="t119" style="top:561.30px;font-size:12px;line-height:18px;height:18px;color:#172B4D;right:1106.12px;">-</span>
<span class="t" id="t120" style="top:561.30px;font-size:12px;line-height:18px;height:18px;color:#172B4D;right:970.34px;">-</span>
<span class="t" id="t121" style="top:561.30px;font-size:12px;line-height:18px;height:18px;color:#172B4D;right:834.56px;">-</span>
<span class="t" id="t122" style="top:561.30px;font-size:12px;line-height:18px;height:18px;color:#172B4D;letter-spacing:-0.185px;right:698.96px;">2d 0h 0m 0s</span>
<span class="t" id="t123" style="top:561.30px;font-size:12px;line-height:18px;height:18px;color:#172B4D;letter-spacing:-0.156px;right:563.16px;">5d 3h 10m 0s</span>
<span class="t" id="t124" style="top:561.30px;font-size:12px;line-height:18px;height:18px;color:#172B4D;letter-spacing:-0.156px;right:427.38px;">7d 3h 20m 0s</span>
<span class="t" id="t125" style="top:561.30px;font-size:12px;line-height:18px;height:18px;color:#172B4D;right:291.44px;">-</span>
<span class="t" id="t126" style="top:561.30px;font-size:12px;line-height:18px;height:18px;color:#172B4D;right:155.66px;">-</span>
<span class="t" id="t127" style="top:561.30px;font-size:12px;line-height:18px;height:18px;color:#172B4D;right:19.88px;">-</span>
<span class="t" id="t128" style="top:611.30px;font-size:12px;line-height:18px;height:18px;color:#2E67AA;-webkit-text-stroke:0.55px #2E67AA;letter-spacing:-0.452px;left:13.10px;">SSP-61</span>
<span class="t" id="t129" style="top:611.30px;font-size:12px;line-height:18px;height:18px;color:#172B4D;letter-spacing:-0.070px;left:137.60px;">Implement Background User</span>
<span class="t" id="t130" style="top:628.30px;font-size:12px;line-height:18px;height:18px;color:#172B4D;letter-spacing:-0.929px;left:137.60px;">Sync</span>
<span class="t" id="t131" style="top:611.30px;font-size:12px;line-height:18px;height:18px;color:#172B4D;letter-spacing:-0.185px;right:1106.30px;">4d 3h 0m 0s</span>
<span class="t" id="t132" style="top:611.30px;font-size:12px;line-height:18px;height:18px;color:#172B4D;letter-spacing:-0.216px;right:970.56px;">10d 3h 30m 0s</span>
<span class="t" id="t133" style="top:611.30px;font-size:12px;line-height:18px;height:18px;color:#172B4D;right:834.56px;">-</span>
<span class="t" id="t134" style="top:611.30px;font-size:12px;line-height:18px;height:18px;color:#172B4D;right:698.78px;">-</span>
<span class="t" id="t135" style="top:611.30px;font-size:12px;line-height:18px;height:18px;color:#172B4D;right:563.00px;">-</span>
<span class="t" id="t136" style="top:611.30px;font-size:12px;line-height:18px;height:18px;color:#172B4D;right:427.22px;">-</span>
<span class="t" id="t137" style="top:611.30px;font-size:12px;line-height:18px;height:18px;color:#172B4D;right:291.44px;">-</span>
<span class="t" id="t138" style="top:611.30px;font-size:12px;line-height:18px;height:18px;color:#172B4D;right:155.66px;">-</span>
<span class="t" id="t139" style="top:611.30px;font-size:12px;line-height:18px;height:18px;color:#172B4D;right:19.88px;">-</span>
<span class="t" id="t140" style="top:660.30px;font-size:12px;line-height:18px;height:18px;color:#2E67AA;-webkit-text-stroke:0.55px #2E67AA;letter-spacing:-0.452px;left:13.10px;">SSP-60</span>
<span class="t" id="t141" style="top:660.30px;font-size:12px;line-height:18px;height:18px;color:#172B4D;letter-spacing:0.008px;left:137.60px;">User Authentication</span>
<span class="t" id="t142" style="top:660.30px;font-size:12px;line-height:18px;height:18px;color:#172B4D;letter-spacing:-0.185px;right:1106.30px;">2d 0h 0m 0s</span>
<span class="t" id="t143" style="top:660.30px;font-size:12px;line-height:18px;height:18px;color:#172B4D;letter-spacing:-0.156px;right:970.50px;">7d 6h 30m 0s</span>
<span class="t" id="t144" style="top:660.30px;font-size:12px;line-height:18px;height:18px;color:#172B4D;right:834.56px;">-</span>
<span class="t" id="t145" style="top:660.30px;font-size:12px;line-height:18px;height:18px;color:#172B4D;right:698.78px;">-</span>
<span class="t" id="t146" style="top:660.30px;font-size:12px;line-height:18px;height:18px;color:#172B4D;right:563.00px;">-</span>
<span class="t" id="t147" style="top:660.30px;font-size:12px;line-height:18px;height:18px;color:#172B4D;right:427.22px;">-</span>
<span class="t" id="t148" style="top:660.30px;font-size:12px;line-height:18px;height:18px;color:#172B4D;right:291.44px;">-</span>
<span class="t" id="t149" style="top:660.30px;font-size:12px;line-height:18px;height:18px;color:#172B4D;right:155.66px;">-</span>
<span class="t" id="t150" style="top:660.30px;font-size:12px;line-height:18px;height:18px;color:#172B4D;right:19.88px;">-</span>
<span class="t" id="t151" style="top:698.30px;font-size:12px;line-height:18px;height:18px;color:#A3A5AA;letter-spacing:-0.277px;left:3.60px;">project = SSP</span>
<span class="t" id="t152" style="top:698.30px;font-size:12px;line-height:18px;height:18px;color:#A3A5AA;letter-spacing:-0.146px;left:1261.40px;">Report Date: 2024-05-09 13:11 / Version: 5.0.0.800</span>
</div></body></html>
